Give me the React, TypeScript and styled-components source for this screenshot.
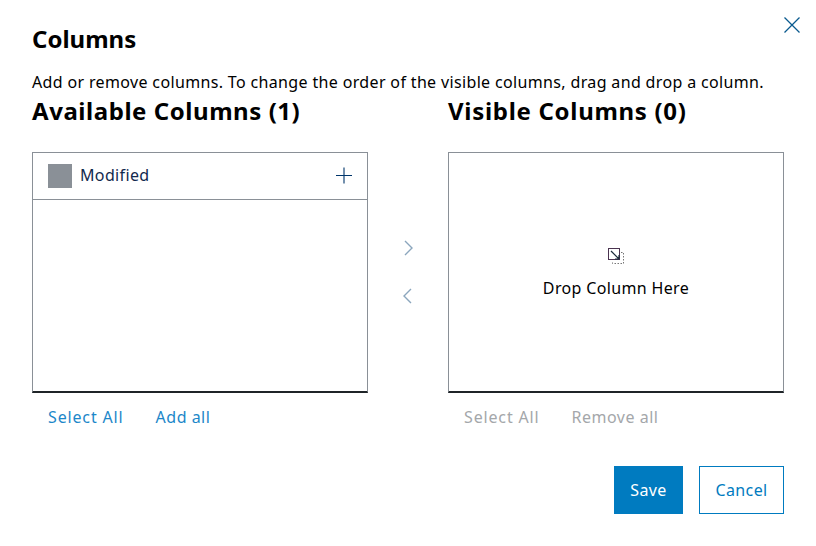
import React from 'react';
import styled, { createGlobalStyle } from 'styled-components';

const Global = createGlobalStyle`
	html, body {
		margin: 0;
		padding: 0;
		background: #fff;
	}
	* {
		box-sizing: border-box;
	}
`;

const Dialog = styled.div`
	position: relative;
	width: 816px;
	height: 546px;
	padding: 24px 32px 0;
	font-family: 'Noto Sans', sans-serif;
	color: #000;
	letter-spacing: 0.35px;
`;

const CloseButton = styled.button`
	position: absolute;
	top: 16px;
	right: 15px;
	width: 18px;
	height: 18px;
	padding: 0;
	border: 0;
	background: none;
	display: flex;
`;

const Title = styled.h2`
	margin: 0;
	font-size: 24px;
	line-height: 29px;
	font-weight: 700;
	letter-spacing: 0;
`;

const Description = styled.p`
	margin: 19px 0 0;
	font-size: 16px;
	line-height: 20px;
`;

const Columns = styled.div`
	display: grid;
	grid-template-columns: 336px 80px 336px;
	margin-top: 2px;
`;

const ColumnPanel = styled.section`
	display: flex;
	flex-direction: column;
`;

const Heading = styled.h3<{ $wide?: boolean }>`
	margin: 0 0 25px;
	height: 33px;
	font-size: 24px;
	line-height: 33px;
	font-weight: 700;
	letter-spacing: ${(props) => (props.$wide ? '0.7px' : '0.55px')};
`;

const ListBox = styled.div<{ $centered?: boolean }>`
	height: 241px;
	border: 1px solid #8a9097;
	border-bottom: 2px solid #1f2428;
	display: flex;
	flex-direction: column;
	${(props) =>
		props.$centered &&
		`
		align-items: center;
		padding-top: 95px;
		`}
`;

const ListRow = styled.div`
	height: 47px;
	padding: 0 14px 0 15px;
	display: flex;
	align-items: center;
	border-bottom: 1px solid #8a9097;
`;

const Swatch = styled.span`
	width: 24px;
	height: 24px;
	background: #8a9097;
	margin-right: 8px;
`;

const RowLabel = styled.span`
	flex: 1;
	font-size: 16px;
	line-height: 20px;
	margin-top: -2px;
	color: #12294d;
`;

const DropLabel = styled.div`
	margin-top: 14px;
	font-size: 16px;
	line-height: 20px;
`;

const Actions = styled.div`
	display: flex;
	gap: 32px;
	padding: 14px 16px 0;
`;

const TextAction = styled.span<{ $disabled?: boolean; $wide?: boolean }>`
	font-size: 16px;
	line-height: 20px;
	letter-spacing: ${(props) => (props.$wide ? '0.85px' : '0.5px')};
	color: ${(props) => (props.$disabled ? '#a4a7aa' : '#1c87c9')};
`;

const MoveButtons = styled.div`
	display: flex;
	flex-direction: column;
	align-items: center;
	gap: 32px;
	padding-top: 146px;
`;

const Footer = styled.div`
	display: flex;
	justify-content: flex-end;
	gap: 16px;
	margin-top: 39px;
`;

const Button = styled.button<{ $primary?: boolean }>`
	height: 48px;
	padding: 0 15.5px;
	font-family: inherit;
	font-size: 16px;
	letter-spacing: 0.35px;
	border: 1px solid #007bc0;
	background: ${(props) => (props.$primary ? '#007bc0' : '#fff')};
	color: ${(props) => (props.$primary ? '#fff' : '#007bc0')};
`;

const CloseIcon = () => (
	<svg width="18" height="18" viewBox="0 0 18 18" fill="none" stroke="#0a5a8f" strokeWidth="1.3">
		<path d="M1.5 1.5 L16.5 16.5 M16.5 1.5 L1.5 16.5" />
	</svg>
);

const PlusIcon = () => (
	<svg width="18" height="18" viewBox="0 0 18 18" fill="none" stroke="#00356b" strokeWidth="1.1">
		<path d="M1 8.5 H17 M9 0.5 V16.5" />
	</svg>
);

const Chevron = ({ left }: { left?: boolean }) => (
	<svg width="16" height="16" viewBox="0 0 16 16" fill="none" stroke="#8ba6bd" strokeWidth="1.4">
		<path d={left ? 'M11 1 L4 8 L11 15' : 'M5 1 L12 8 L5 15'} />
	</svg>
);

const DropIcon = () => (
	<svg width="16" height="16" viewBox="0 0 16 16" fill="none">
		<rect x="0.5" y="0.5" width="11" height="11" stroke="#4a3350" />
		<path d="M3 3 L11 11 M11 7 V11 H7" stroke="#1a2a3a" strokeWidth="1.2" />
		<path d="M13 4.5 H15.5 V15.5 H4.5 V13" stroke="#777" strokeDasharray="1.5 1.5" />
	</svg>
);

export default function App() {
	return (
		<>
			<Global />
			<Dialog>
				<CloseButton>
					<CloseIcon />
				</CloseButton>
				<Title>Columns</Title>
				<Description>
					Add or remove columns. To change the order of the visible columns, drag and drop a column.
				</Description>
				<Columns>
					<ColumnPanel>
						<Heading>Available Columns (1)</Heading>
						<ListBox>
							<ListRow>
								<Swatch />
								<RowLabel>Modified</RowLabel>
								<PlusIcon />
							</ListRow>
						</ListBox>
						<Actions>
							<TextAction $wide>Select All</TextAction>
							<TextAction>Add all</TextAction>
						</Actions>
					</ColumnPanel>
					<MoveButtons>
						<Chevron />
						<Chevron left />
					</MoveButtons>
					<ColumnPanel>
						<Heading $wide>Visible Columns (0)</Heading>
						<ListBox $centered>
							<DropIcon />
							<DropLabel>Drop Column Here</DropLabel>
						</ListBox>
						<Actions>
							<TextAction $disabled $wide>Select All</TextAction>
							<TextAction $disabled>Remove all</TextAction>
						</Actions>
					</ColumnPanel>
				</Columns>
				<Footer>
					<Button $primary>Save</Button>
					<Button>Cancel</Button>
				</Footer>
			</Dialog>
		</>
	);
}
